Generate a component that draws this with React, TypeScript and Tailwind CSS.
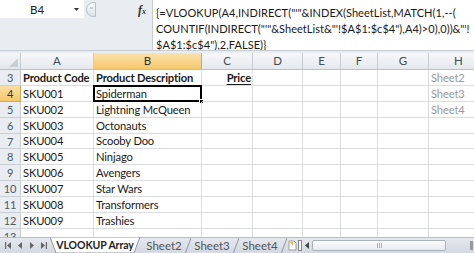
import React from "react";

const cols = [
  { k: "A", w: 73 },
  { k: "B", w: 108 },
  { k: "C", w: 51 },
  { k: "D", w: 50 },
  { k: "E", w: 38 },
  { k: "F", w: 37 },
  { k: "G", w: 51 },
  { k: "H", w: 60 },
];

const rows: { n: number; a: string; b: string; c?: string; h?: string; bold?: boolean }[] = [
  { n: 3, a: "Product Code", b: "Product Description", c: "Price", h: "Sheet2", bold: true },
  { n: 4, a: "SKU001", b: "Spiderman", h: "Sheet3" },
  { n: 5, a: "SKU002", b: "Lightning McQueen", h: "Sheet4" },
  { n: 6, a: "SKU003", b: "Octonauts" },
  { n: 7, a: "SKU004", b: "Scooby Doo" },
  { n: 8, a: "SKU005", b: "Ninjago" },
  { n: 9, a: "SKU006", b: "Avengers" },
  { n: 10, a: "SKU007", b: "Star Wars" },
  { n: 11, a: "SKU008", b: "Transformers" },
  { n: 12, a: "SKU009", b: "Trashies" },
  { n: 13, a: "", b: "" },
];

const font = { fontFamily: "Lato, 'Liberation Sans', sans-serif" };

export default function App() {
  return (
    <div className="w-[474px] h-[253px] overflow-hidden bg-white relative text-[#1a1a1a]" style={font}>
      {/* formula bar */}
      <div className="flex h-[51px] bg-[#e9ecf0] border-b border-[#c6ccd4]">
        <div className="w-[152px] shrink-0 flex flex-col">
          <div className="flex items-center h-[18px] relative">
            <div className="w-[84px] h-[18px] bg-white relative">
              <span className="absolute left-[30px] top-[4px] text-[11.5px] leading-none text-[#222]">B4</span>
              <svg className="absolute left-[74px] top-[8px]" width="5" height="3" viewBox="0 0 5 3">
                <path d="M0 0 L5 0 L2.5 3 Z" fill="#333" />
              </svg>
            </div>
            <div className="w-[10px] h-[15px] ml-[2px] rounded-l-full border border-[#b8bec6] bg-gradient-to-b from-[#fafbfc] to-[#dfe3e8] relative">
              <div className="absolute left-[3px] top-[4px] w-[3px] h-[2px] bg-[#c8ccd2]" />
            </div>
            <span className="absolute left-[138px] top-[4px] text-[12px] italic font-bold leading-none text-[#333]" style={{ fontFamily: "'Liberation Serif', serif" }}>
              f<span className="text-[8px]">x</span>
            </span>
          </div>
        </div>
        <div className="flex-1 bg-white border-l border-[#c6ccd4] pl-[3px] pt-[5px] text-[11px] leading-[16px] tracking-[0.05px] whitespace-nowrap overflow-hidden">
          <div>{'{=VLOOKUP(A4,INDIRECT("\'"&INDEX(SheetList,MATCH(1,--('}</div>
          <div>{'COUNTIF(INDIRECT("\'"&SheetList&"\'!$A$1:$c$4"),A4)>0),0))&"\'!'}</div>
          <div>{'$A$1:$c$4"),2,FALSE)}'}</div>
        </div>
      </div>
      <div className="h-[2px] bg-[#e9ecf0]" />
      {/* column headers */}
      <div className="flex h-[17px] border-b border-[#b9c0c9]">
        <div className="w-[21px] shrink-0 bg-gradient-to-b from-[#f4f6f8] to-[#e3e7ec] border-r border-[#c3c9d1] relative">
          <svg className="absolute right-[2px] bottom-[2px]" width="9" height="9" viewBox="0 0 9 9">
            <path d="M9 0 L9 9 L0 9 Z" fill="#c9ced5" />
          </svg>
        </div>
        {cols.map((c) => (
          <div
            key={c.k}
            style={{ width: c.w }}
            className={`shrink-0 flex items-center justify-center text-[11.5px] border-r ${
              c.k === "B"
                ? "bg-gradient-to-b from-[#fbe3ad] to-[#f5c768] border-[#d7a94c] text-[#333]"
                : "bg-gradient-to-b from-[#f7f8fa] to-[#e4e8ed] border-[#c9ced5] text-[#444c57]"
            }`}
          >
            {c.k}
          </div>
        ))}
      </div>
      {/* rows */}
      {rows.map((r) => (
        <div key={r.n} className="flex h-[15.9px] text-[11.2px] tracking-[-0.15px] leading-none">
          <div
            className={`w-[21px] shrink-0 flex items-center justify-center border-r border-b ${
              r.n === 4
                ? "bg-gradient-to-b from-[#fbe0a5] to-[#f5c768] border-[#d7a94c] text-[#333]"
                : "bg-[#e9ecf0] border-[#c9ced5] text-[#4d5866]"
            } text-[11px]`}
          >
            {r.n}
          </div>
          {cols.map((c) => {
            let content: React.ReactNode = null;
            let cls = "pl-[2px]";
            if (c.k === "A") content = r.a;
            if (c.k === "B") content = r.b;
            if (c.k === "C" && r.c) {
              content = <span className="underline underline-offset-[2px]">{r.c}</span>;
              cls = "justify-end pr-[1px]";
            }
            if (c.k === "H" && r.h) {
              content = r.h;
              cls = "pl-[2px] text-[#9a9a9a]";
            }
            const sel = r.n === 4 && c.k === "B";
            return (
              <div
                key={c.k}
                style={{ width: c.w }}
                className={`shrink-0 flex items-center border-r border-b border-[#dadcdf] whitespace-nowrap overflow-visible relative ${cls} ${
                  r.bold && c.k !== "H" ? "font-bold" : ""
                }`}
              >
                {content}
                {sel && (
                  <>
                    <div className="absolute -left-[1px] -top-[1px] -right-[1px] -bottom-[1px] border-2 border-black" />
                    <div className="absolute -right-[3px] -bottom-[3px] w-[5px] h-[5px] bg-black border border-white" />
                  </>
                )}
              </div>
            );
          })}
        </div>
      ))}
      {/* tab bar */}
      <div className="absolute left-0 right-0 bottom-0 h-[16px] bg-gradient-to-b from-[#e4e8ee] to-[#d3d9e1] border-t border-[#b6bdc7] flex items-stretch text-[11.5px] leading-none whitespace-nowrap">
        <div className="w-[50px] shrink-0 flex items-center gap-[6px] pl-[5px] text-[#555]">
          <svg width="7" height="7" viewBox="0 0 7 7"><path d="M0 0h1.2v7H0z M6 0 L2 3.5 L6 7 Z" fill="#666" /></svg>
          <svg width="5" height="7" viewBox="0 0 5 7"><path d="M4 0 L0 3.5 L4 7 Z" fill="#666" /></svg>
          <svg width="5" height="7" viewBox="0 0 5 7"><path d="M1 0 L5 3.5 L1 7 Z" fill="#666" /></svg>
          <svg width="7" height="7" viewBox="0 0 7 7"><path d="M1 0 L5 3.5 L1 7 Z M5.8 0h1.2v7H5.8z" fill="#666" /></svg>
        </div>
        <div className="w-[90px] shrink-0 -mt-[1px] relative flex items-center justify-center font-bold text-[#222] text-[10.5px] tracking-[-0.1px]">
          <svg className="absolute inset-0" width="90" height="16" viewBox="0 0 90 16" preserveAspectRatio="none">
            <path d="M0 0 L90 0 L84 16 L6 16 Z" fill="#fff" stroke="#8c96a2" strokeWidth="1" />
          </svg>
          <span className="relative">VLOOKUP Array</span>
        </div>
        {["Sheet2", "Sheet3", "Sheet4"].map((s) => (
          <div key={s} className="w-[48px] shrink-0 flex items-center justify-center text-[#555] relative">
            <span>{s}</span>
            <svg className="absolute -right-[3px] top-0" width="6" height="16" viewBox="0 0 6 16">
              <path d="M0 16 L6 0" stroke="#8c96a2" strokeWidth="1" />
            </svg>
          </div>
        ))}
        <div className="w-[12px] shrink-0 flex items-center justify-center ml-[2px]">
          <svg width="9" height="11" viewBox="0 0 9 11">
            <path d="M1 1h5l2 2v7H1z" fill="#fff" stroke="#888" strokeWidth="0.8" />
            <path d="M2 2 L5 2 L5 6 Z" fill="#e8b64a" />
          </svg>
        </div>
        <div className="w-[4px] shrink-0 my-[2px] bg-[#f4f4f4] border border-[#888]" />
        <div className="w-[10px] shrink-0 flex items-center justify-center">
          <svg width="4" height="7" viewBox="0 0 4 7"><path d="M4 0 L0 3.5 L4 7 Z" fill="#444" /></svg>
        </div>
        <div className="w-[134px] shrink-0 my-[2px] rounded-[2px] border border-[#a9b2bd] bg-gradient-to-b from-[#fdfdfe] to-[#e6eaef] flex items-center justify-center">
          <div className="w-[5px] h-[5px] border-l border-r border-[#aab2bc] relative">
            <div className="absolute left-[1px] top-0 w-[1px] h-[5px] bg-[#aab2bc]" />
          </div>
        </div>
        <div className="flex-1" />
        <div className="w-[3px] my-[3px] mr-[1px] bg-[#999]" />
      </div>
    </div>
  );
}
